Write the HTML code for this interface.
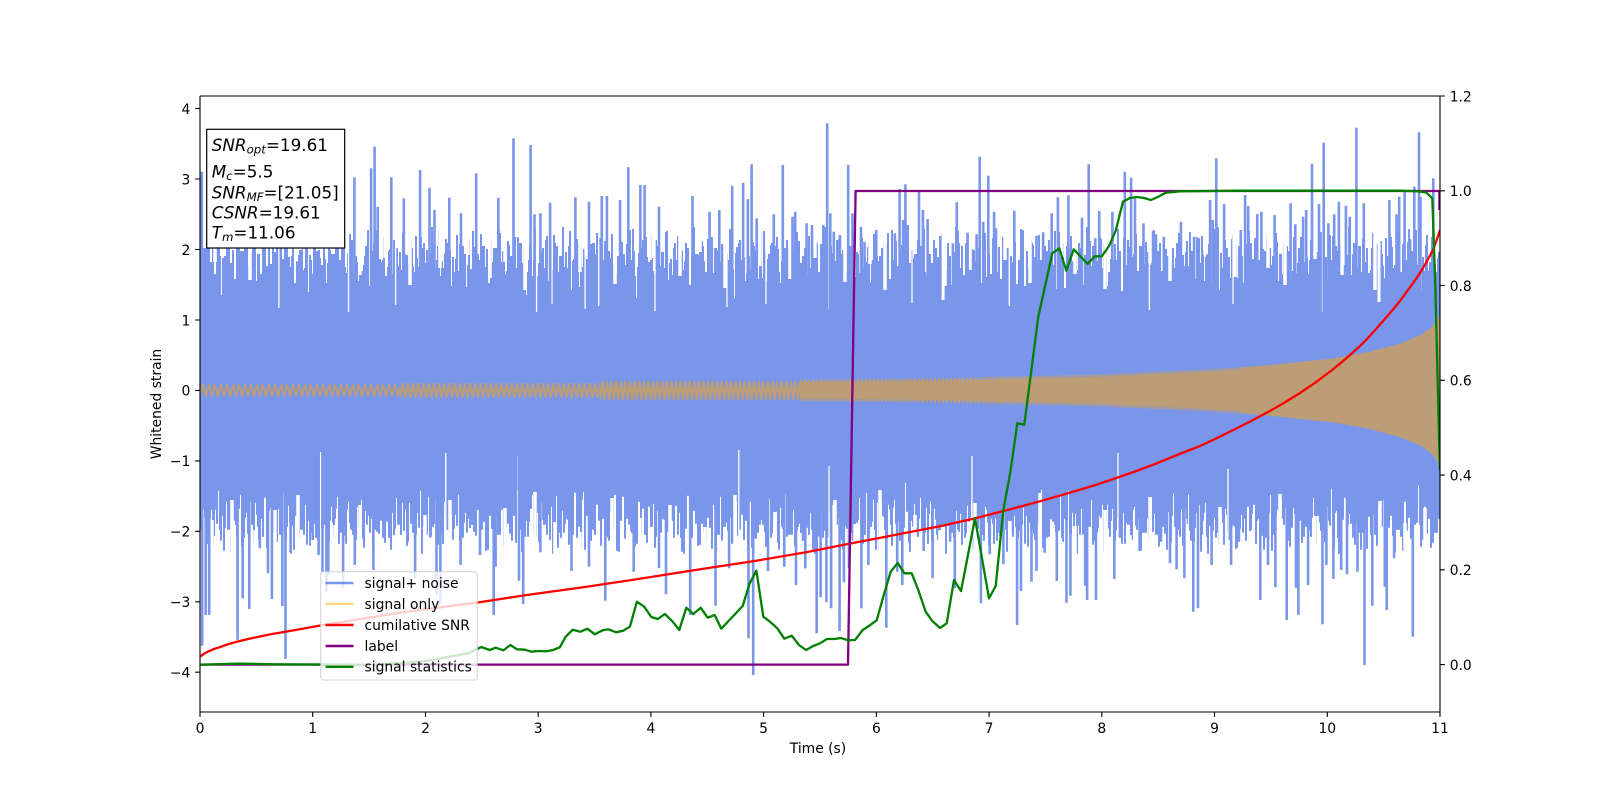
<!DOCTYPE html>
<html>
<head>
<meta charset="utf-8">
<style>
html,body{margin:0;padding:0;background:#fff;width:1600px;height:800px;overflow:hidden}
svg{display:block}
text{font-family:"DejaVu Sans","Liberation Sans",sans-serif;fill:#000}
</style>
</head>
<body>
<svg xmlns="http://www.w3.org/2000/svg" width="1600" height="800" viewBox="0 0 1600 800">
<defs>
<clipPath id="c"><rect x="200" y="96" width="1240" height="616"/></clipPath>
<pattern id="pa" patternUnits="userSpaceOnUse" x="200" y="200" width="97" height="125">
<path fill="#7a96ea" d="M0 125V62h2V48h2V85h2V70h2V33h2V92h2V55h2V74h2V41h2V66h2V100h2V58h2V79h2V37h2V88h2V63h2V50h2V95h2V72h2V44h2V84h2V60h2V29h2V76h2V98h2V53h2V68h2V40h2V90h2V57h2V81h2V35h2V71h2V104h2V46h2V64h2V87h2V52h2V78h2V31h2V93h2V59h2V75h2V43h2V96h2V67h2V49h2V83h2V61h2V125Z"/>
</pattern>
<pattern id="pb" patternUnits="userSpaceOnUse" x="200" y="200" width="131" height="125">
<path fill="#7a96ea" d="M0 125V77h2V54h2V91h2V38h2V69h2V102h2V47h2V82h2V60h2V34h2V95h2V73h2V56h2V88h2V42h2V105h2V65h2V79h2V30h2V86h2V51h2V99h2V71h2V45h2V93h2V62h2V37h2V84h2V107h2V58h2V74h2V40h2V97h2V66h2V52h2V89h2V32h2V80h2V63h2V101h2V48h2V76h2V36h2V94h2V57h2V70h2V43h2V103h2V85h2V55h2V27h2V90h2V68h2V46h2V98h2V61h2V78h2V39h2V87h2V50h2V106h2V72h2V59h2V83h2V44h2V92h2V125Z"/>
</pattern>
<pattern id="pc" patternUnits="userSpaceOnUse" x="200" y="200" width="73" height="125">
<path fill="#7a96ea" d="M0 125V73h3V48h3V90h3V62h3V106h3V78h3V56h3V113h3V68h3V43h3V86h3V100h3V60h3V76h3V51h3V94h3V65h3V108h3V81h3V54h3V88h3V46h3V72h3V103h3V67h3V125Z"/>
</pattern>
<pattern id="z1" patternUnits="userSpaceOnUse" x="200" y="380" width="6" height="21">
<path fill="none" stroke="#bc9d75" stroke-width="2" stroke-linejoin="round" d="M-3 4.9L0 15.9L3 4.9L6 15.9L9 4.9"/>
</pattern>
<pattern id="z2" patternUnits="userSpaceOnUse" x="400" y="380" width="5.2" height="21">
<path fill="none" stroke="#bc9d75" stroke-width="2.2" stroke-linejoin="round" d="M-2.6 3.9L0 16.9L2.6 3.9L5.2 16.9L7.8 3.9"/>
</pattern>
<pattern id="z3" patternUnits="userSpaceOnUse" x="600" y="380" width="4.6" height="21">
<path fill="none" stroke="#bc9d75" stroke-width="2.4" stroke-linejoin="round" d="M-2.3 2L0 18.8L2.3 2L4.6 18.8L6.9 2"/>
</pattern>
</defs>
<rect width="1600" height="800" fill="#fff"/>
<g clip-path="url(#c)" fill="none" stroke-linejoin="round">
<rect x="200" y="320" width="1240" height="141" fill="#7a96ea"/>
<rect x="200" y="201" width="1240" height="124" fill="url(#pa)"/>
<rect x="200" y="201" width="1240" height="124" fill="url(#pb)"/>
<rect x="200" y="201" width="1240" height="124" fill="url(#pc)"/>
<g transform="translate(1640 780.8) scale(-1 -1)">
<rect x="200" y="201" width="1240" height="124" fill="url(#pa)"/>
<rect x="200" y="201" width="1240" height="124" fill="url(#pb)"/>
<rect x="200" y="201" width="1240" height="124" fill="url(#pc)"/>
</g>
<path stroke="#fff" stroke-width="3.5" d="M215 200V262M250 200V280M300 200V250M360 200V275M385 200V258M410 200V285M440 200V268M468 200V255M490 200V278M505 200V262M525 200V290M560 200V256M580 200V272M615 200V284M650 200V260M680 200V276M700 200V252M725 200V288M760 200V266M790 200V279M815 200V258M845 200V282M870 200V264M885 200V290M930 200V254M945 200V286M970 200V270M1005 200V260M1030 200V283M1062 200V257M1075 200V274M1105 200V289M1150 200V263M1170 200V281M1205 200V255M1235 200V277M1268 200V268M1285 200V285M1315 200V259M1342 200V275M1375 200V290M1395 200V265
M212 600V520M232 600V500M255 600V530M275 600V510M298 600V495M335 600V525M360 600V505M395 600V535M425 600V515M450 600V500M470 600V528M505 600V508M535 600V492M555 600V522M580 600V532M612 600V498M640 600V518M670 600V505M705 600V527M735 600V495M775 600V512M800 600V533M835 600V500M855 600V524M880 600V490M915 600V515M940 600V530M975 600V503M1010 600V521M1040 600V493M1075 600V526M1105 600V510M1130 600V535M1150 600V497M1185 600V519M1220 600V507M1250 600V531M1280 600V494M1315 600V516M1350 600V529M1380 600V501M1405 600V523M1425 600V508"/>
<path stroke="#fff" stroke-width="1.3" d="M278.9 200V308M348.5 200V312M395.6 200V305M448.9 200V310M536.5 200V312M552 200V304M585.1 200V309M598.7 200V306M655 200V311M727 200V307M766 200V304M828.3 200V309M912 200V303M1009.3 200V306M1149.4 200V310M1322.5 200V312M1233 200V304M205.7 600V468M320.5 600V452M445.8 600V453M518 600V456M738.8 600V450M829 600V466M972 600V456M1118 600V453M1228 600V469"/>
<path stroke="#fff" stroke-width="3" d="M943.1 200V300M1379 200V302"/>
<path stroke="#7a96ea" stroke-width="2.6" d="M201.8 171.7V390M354.4 177.3V390M371.1 168.3V390M374.6 146.7V390M377.7 206.7V390M391.3 177.3V390M403.8 198.3V390M420.1 170V390M429.5 187.7V390M434.5 210V390M449.3 197.7V390M461 213.3V390M476.2 173.3V390M498.3 197.7V390M513.5 138.3V390M530.6 145V390M534.5 214.3V390M540.4 213.3V390M550.1 202.7V390M575.4 197.3V390M589 201.7V390M601.8 196V390M606.9 196V390M620.1 200V390M628.3 167.3V390M640.4 185V390M644.6 185V390M659 206.7V390M692.5 196V390M709.6 211.7V390M719.3 210V390M732.2 185.7V390M743.1 182.7V390M747.8 199.3V390M751.6 164.3V390M756.7 218.3V390M773.8 214.3V390M782.8 165V390M792.5 216.7V390M795.2 211.7V390
M827.2 123.3V390M830.3 213.3V390M806.6 223.3V390M812 225V390M823.3 225V390M833.8 231.7V390M840 235V390M848.2 165V390M852.5 213.3V390M861 226.7V390M864.5 241.7V390M876.2 230V390M894.9 233.3V390M899.6 189V390M905.4 184.3V390M903.1 220V390M907.7 225V390M919 190V390M922.9 210V390M927.6 219V390M952.9 243.3V390M956.8 202.3V390M967.6 232.7V390M976.6 234.3V390M979.7 156.7V390M983.2 221.7V390M988.3 175.7V390M994.1 211.7V390M996 228.3V390M1014.3 210.7V390M1036.5 235.7V390M1043.1 232.3V390M1051.7 213.3V390M1057.9 197.3V390M1068.4 195.3V390M1082 217.7V390M1088.7 164.3V390M1095.3 238.3V390M1099.2 211V390M1112.4 211.7V390M1124.8 171.7V390M1131.1 177.7V390M1135 198.3V390M1143.5 223.3V390M1156 234.3V390M1163.8 236.7V390M1180.9 221.7V390M1194.1 236.7V390M1198.8 238.3V390M1210.1 200V390M1212.8 220V390M1216.3 158.3V390M1224.1 204V390M1245.1 195V390M1248.2 205.7V390M1240.8 230V390M1257.2 214V390M1261.4 211.7V390M1274.6 215V390M1290.6 203.3V390M1295.3 224.3V390M1303.1 216.7V390M1306.2 210V390M1312 163.7V390M1319 204V390M1323.7 142.7V390M1328.4 223.3V390M1334.2 214.3V390M1338.9 201.7V390M1345.9 205.7V390M1349.8 216.7V390M1356.4 127.7V390M1363.8 203.3V390M1389.4 200V390M1396.5 214.3V390M1399.2 196.7V390M1404.6 192.3V390M1410.1 239V390M1414.3 186.7V390M1419 132.3V390M1420.5 196.7V390M1433.3 178.3V390
M202.2 645.7V390M205.7 615V390M209.2 615V390M237.6 640V390M242.7 598.3V390M249.3 609V390M259.8 548.3V390M268 573.3V390M271.9 599V390M282.4 606V390M285.5 659V390M290.6 552.3V390M312.7 540V390M318.6 555V390M322.5 571.7V390M326.4 591.7V390M328.3 575V390M343.1 588.3V390M354.8 565V390M373.4 570V390M415.1 578.3V390M436.5 595V390M440.4 603.3V390M460.6 565V390M480 555V390M493.7 615V390M495.6 566.7V390M519 580.7V390M523.2 604V390M540.4 552.3V390M571.5 571V390M589 566.7V390M605.3 600.7V390M633.7 571.7V390M659 568.3V390M666 594.3V390M690.2 615V390M682.4 551.7V390M715.5 605.7V390M729.1 568.3V390M748.5 638.3V390M753.2 675V390M768 571V390M784.3 566.7V390M796 585V390M805.3 568.3V390
M816.7 633.3V390M820.6 597.3V390M826.4 602.3V390M831.1 608.3V390M839.6 631V390M843.9 582.3V390M849 568.3V390M861.4 608.3V390M868.4 565V390M886.3 627.7V390M897.2 571.7V390M902.3 585V390M909.3 540.7V390M923.7 551V390M932.6 578.3V390M950.1 541.7V390M954.8 588.3V390M965.3 534.3V390M980.9 603.3V390M989.8 554.3V390M1003.4 564.3V390M1017.1 625V390M1021 591V390M1031.5 581.7V390M1036.5 571V390M1044.7 552.7V390M1056.8 581V390M1066.5 602.7V390M1070.4 595.7V390M1085.2 585.7V390M1087.1 600V390M1096 600V390M1114.3 579V390M1139.6 551V390M1161 541.7V390M1170 563.3V390M1176.6 569.3V390M1184.4 578.3V390M1193.3 611.7V390M1198 608.3V390M1211.6 565V390M1231.1 565V390M1238.9 541.7V390M1260.3 600V390M1268 565V390M1275.4 587.3V390M1286.7 620V390M1296 587.7V390M1298.4 615V390M1308.1 585V390M1322.5 624.3V390M1326.4 565V390M1333.4 579V390M1341.2 570V390M1347 574.3V390M1357.5 571.7V390M1364.5 665V390M1372.3 605.7V390M1384.8 586.7V390M1386.7 610V390M1394.1 558.3V390M1412.8 636.7V390"/>
<rect x="200" y="380" width="200" height="21" fill="url(#z1)"/>
<rect x="400" y="380" width="200" height="21" fill="url(#z2)"/>
<rect x="600" y="380" width="200" height="21" fill="url(#z3)"/>
<path fill="#bc9d75" d="M800 382.3L940 380.7L1100 376.9L1200 372.3L1240 369.9L1240 367.4L1267 365.4L1333 358.4L1367 352.4L1400 343.7L1420 335.4L1430 328.4L1433 325.4L1440 315.4V465.4L1433 455.4L1430 452.4L1420 445.4L1400 437.1L1367 428.4L1333 422.4L1267 415.4L1240 413.4L1240 410.9L1200 408.5L1100 403.9L940 400.1L800 398.5Z"/>
<g stroke="#bc9d75" stroke-width="2.6">
<path stroke-dasharray="2.4 1.65" d="M800 381.1L940 379.5L1000 378.1M800 399.7L940 401.3L1000 402.7"/>
<path stroke-dasharray="2 1.4" d="M1000 378.1L1100 375.7L1120 374.8M1000 402.7L1100 405.1L1120 406"/>
<path stroke-dasharray="1.6 1" d="M1120 374.8L1200 371.1L1240 368.7M1120 406L1200 409.7L1240 412.1"/>
</g>
<polyline stroke="#f00" stroke-width="2.3" points="200,657 202,655.2 204,653.7 207.7,651.7 213,649.4 219.3,647.3 227,644.6 236.9,641.7 248,639 260,636.5 272,634 285.5,631.7 303,628.6 320.5,625.5 342,622 363.3,618.5 388,614.6 413.9,610.7 445,606.7 476.2,602.7 526.7,595 585,587 631.8,580 666.8,574.5 701.8,569 756.3,560.7 806,552.3 851.7,543.3 898.4,534.3 941.2,526 974.3,518.5 1003.4,511 1038.5,501.7 1077.4,490.5 1097,484.5 1116.3,478 1135,471.5 1155,464 1177,455 1200,446 1216.7,438.2 1233.3,430 1250,421.6 1266.7,412.7 1283,403.5 1300,393 1316.7,381.7 1333.3,369 1341.7,362.2 1350,355 1358.5,347.4 1367,339 1375,330.2 1383.3,320.7 1391.7,311 1400,301 1408,290 1414,281.8 1420,273 1426.5,262 1433,250 1436.5,240.5 1440,230"/>
<polyline stroke="#800080" stroke-width="2.3" points="200,664.6 848,664.6 855.6,191 1439.4,191 1439.4,210"/>
<polyline stroke="#008000" stroke-width="2.3" points="200,664.7 238.8,663.6 273.8,664.3 371,664.7 421.7,661.7 449,656.7 468.4,653.3 481.2,647 489.8,650 495.6,647.7 503.4,650.3 510.4,645 517,649.3 524.8,649.7 531.4,651.7 538.4,651 546.2,651.3 553.2,650 559.8,647.3 565.7,636.7 572.7,629.7 580.4,631.7 587.4,628.7 594.8,634.3 602.6,630.3 608.5,629.3 616.2,632.3 623.2,630.7 629.9,626.7 636.9,601.7 644.2,606.7 651.3,617 657.9,619 664.9,614 672.7,621.7 679.3,630 686.3,607.7 693.3,614 700.7,607.7 707.7,617.7 714.7,615 721.3,628.7 742.7,606 749.7,583.3 756.4,570.7 763.3,616.7 770,621.7 777.3,628.3 784.3,638.7 791.7,635.7 799,645 806,650 813.3,646 820,643.3 827,639 834.3,639 841,638 848.3,640.3 855,640 862.7,630 869.3,625.7 876.7,620.3 883.3,596.7 890.7,571.7 897.7,563 904.3,573.3 911.7,573.3 918.3,590 925.7,611.7 932.3,621 940,628 946.7,623.3 954,580 961,591 968.3,553.3 975,518.3 989,598.3 995.7,586 1003.4,510 1010.4,471.7 1017.3,423.3 1024.3,424.7 1038.3,316.7 1052.3,253.3 1059.3,248.3 1066.3,270.7 1073.7,249.3 1087.7,264 1094.7,256.3 1101.7,256.3 1109,246 1115.7,230.7 1123,201.7 1130,198 1136.7,197 1144,198 1151,200 1158.3,196.7 1165.7,192.7 1180,191.3 1240,190.7 1400,190.7 1418,191.3 1426,192.3 1432.3,198.3 1435.3,285 1439.3,446.7 1440,470"/>
</g>
<g stroke="#000" stroke-width="1.11" fill="none">
<path d="M200 96V712M1440 96V712M200 96H1440M200 712H1440"/>
<path d="M200 712v4.9M312.7 712v4.9M425.5 712v4.9M538.2 712v4.9M650.9 712v4.9M763.6 712v4.9M876.4 712v4.9M989.1 712v4.9M1101.8 712v4.9M1214.5 712v4.9M1327.3 712v4.9M1440 712v4.9"/>
<path d="M200 108.6h-4.9M200 179h-4.9M200 249.5h-4.9M200 320h-4.9M200 390.4h-4.9M200 460.9h-4.9M200 531.3h-4.9M200 601.8h-4.9M200 672.2h-4.9"/>
<path d="M1440 96h4.9M1440 190.8h4.9M1440 285.6h4.9M1440 380.3h4.9M1440 475.1h4.9M1440 569.8h4.9M1440 664.6h4.9"/>
</g>
<g font-size="13.89" text-anchor="middle">
<text x="200" y="733">0</text><text x="312.7" y="733">1</text><text x="425.5" y="733">2</text><text x="538.2" y="733">3</text><text x="650.9" y="733">4</text><text x="763.6" y="733">5</text><text x="876.4" y="733">6</text><text x="989.1" y="733">7</text><text x="1101.8" y="733">8</text><text x="1214.5" y="733">9</text><text x="1327.3" y="733">10</text><text x="1440" y="733">11</text>
<text x="818" y="753">Time (s)</text>
<text transform="translate(161 404) rotate(-90)">Whitened strain</text>
</g>
<g font-size="13.89" text-anchor="end">
<text x="190.3" y="113.9">4</text><text x="190.3" y="184.3">3</text><text x="190.3" y="254.8">2</text><text x="190.3" y="325.3">1</text><text x="190.3" y="395.7">0</text><text x="190.3" y="466.2">−1</text><text x="190.3" y="536.6">−2</text><text x="190.3" y="607.1">−3</text><text x="190.3" y="677.5">−4</text>
</g>
<g font-size="13.89">
<text x="1449.7" y="101.3">1.2</text><text x="1449.7" y="196.1">1.0</text><text x="1449.7" y="290.9">0.8</text><text x="1449.7" y="385.6">0.6</text><text x="1449.7" y="480.4">0.4</text><text x="1449.7" y="575.1">0.2</text><text x="1449.7" y="669.9">0.0</text>
</g>
<rect x="320.7" y="571.7" width="156.6" height="108.3" rx="2.8" fill="#fff" fill-opacity=".8" stroke="#ccc" stroke-opacity=".8" stroke-width="1.11"/>
<g stroke-width="2.4" fill="none">
<path d="M325.5 583H353.5" stroke="#4169e1" stroke-opacity=".7"/>
<path d="M325.5 603.8H353.5" stroke="#ffa500" stroke-opacity=".5"/>
<path d="M325.5 625H353.5" stroke="#f00"/>
<path d="M325.5 646H353.5" stroke="#800080"/>
<path d="M325.5 666.8H353.5" stroke="#008000"/>
</g>
<g font-size="13.89">
<text x="364.5" y="588.2">signal+ noise</text>
<text x="364.5" y="609">signal only</text>
<text x="364.5" y="630">cumilative SNR</text>
<text x="364.5" y="650.8">label</text>
<text x="364.5" y="671.6">signal statistics</text>
</g>
<rect x="206.7" y="129.3" width="138" height="118.7" fill="#fff" stroke="#000" stroke-width="1.2"/>
<g font-size="16.8">
<text x="211.7" y="151"><tspan font-style="italic">SNR</tspan><tspan font-style="italic" font-size="11.76" dy="2.5">opt</tspan><tspan dy="-2.5">=19.61</tspan></text>
<text x="211.7" y="177.3"><tspan font-style="italic">M</tspan><tspan font-style="italic" font-size="11.76" dy="2.5">c</tspan><tspan dy="-2.5">=5.5</tspan></text>
<text x="211.7" y="198.3"><tspan font-style="italic">SNR</tspan><tspan font-style="italic" font-size="11.76" dy="2.5">MF</tspan><tspan dy="-2.5">=[21.05]</tspan></text>
<text x="211.7" y="218.3"><tspan font-style="italic">CSNR</tspan>=19.61</text>
<text x="211.7" y="238.3"><tspan font-style="italic">T</tspan><tspan font-style="italic" font-size="11.76" dy="2.5">m</tspan><tspan dy="-2.5">=11.06</tspan></text>
</g>
</svg>
</body>
</html>
